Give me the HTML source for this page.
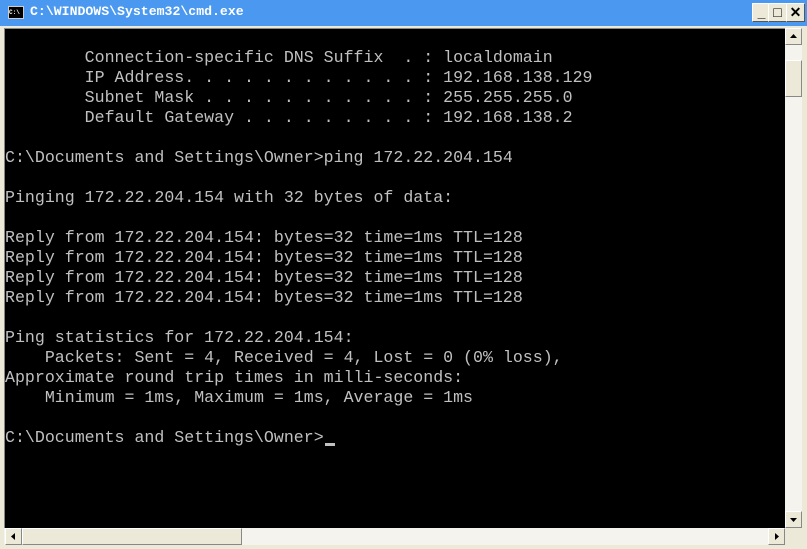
<!DOCTYPE html><html><head><style>
body{margin:0;width:807px;height:548px;overflow:hidden;background:#ece9d8;position:relative;font-family:"Liberation Sans",sans-serif}
.t{position:absolute;left:0;top:0;width:807px;height:26px;background:#4a98f0}
.tt{position:absolute;left:30px;top:4px;color:#fff;font:bold 13.2px "Liberation Mono",monospace}
.ic{position:absolute;left:8px;top:6px;width:14px;height:11px;background:#000;border:1px solid #ccc;color:#fff;font:bold 6px monospace;line-height:11px}
.b{position:absolute;top:3px;width:19px;height:19px;background:#ece9d8;border:1px solid #fff;border-right-color:#555;border-bottom-color:#555;box-sizing:border-box;text-align:center;font:bold 14px "Liberation Sans";line-height:17px;color:#000}
.con{position:absolute;left:4px;top:28px;width:781px;height:500px;background:#000;border-left:1px solid #888;border-top:1px solid #888;box-sizing:border-box}
pre{margin:0;position:absolute;left:5px;top:28px;color:#c0c0c0;font:16.6px/20px "Liberation Mono",monospace}
.vs{position:absolute;left:785px;top:28px;width:17px;height:500px;background:#f4f3ee}
.btn{position:absolute;width:17px;height:17px;background:#ece9d8;border:1px solid #fff;border-right-color:#888;border-bottom-color:#888;box-sizing:border-box}
.hs{position:absolute;left:4px;top:528px;width:781px;height:17px;background:#f4f3ee}
.cur{position:absolute;left:325px;top:443px;width:10px;height:3px;background:#c0c0c0}
</style></head><body>
<div class="t"><div class="ic">C:\</div><div class="tt">C:\WINDOWS\System32\cmd.exe</div>
<div class="b" style="left:752px">_</div><div class="b" style="left:768px">□</div><div class="b" style="left:786px">✕</div></div>
<div class="con"></div>
<pre>

        Connection-specific DNS Suffix  . : localdomain
        IP Address. . . . . . . . . . . . : 192.168.138.129
        Subnet Mask . . . . . . . . . . . : 255.255.255.0
        Default Gateway . . . . . . . . . : 192.168.138.2

C:\Documents and Settings\Owner>ping 172.22.204.154

Pinging 172.22.204.154 with 32 bytes of data:

Reply from 172.22.204.154: bytes=32 time=1ms TTL=128
Reply from 172.22.204.154: bytes=32 time=1ms TTL=128
Reply from 172.22.204.154: bytes=32 time=1ms TTL=128
Reply from 172.22.204.154: bytes=32 time=1ms TTL=128

Ping statistics for 172.22.204.154:
    Packets: Sent = 4, Received = 4, Lost = 0 (0% loss),
Approximate round trip times in milli-seconds:
    Minimum = 1ms, Maximum = 1ms, Average = 1ms

C:\Documents and Settings\Owner></pre>
<div class="cur"></div>
<div class="vs">
<div class="btn" style="left:0;top:0"><svg width="15" height="15"><path d="M4 9h7l-3.5-4z"/></svg></div>
<div class="btn" style="left:0;top:32px;height:37px"></div>
<div class="btn" style="left:0;top:483px"><svg width="15" height="15"><path d="M4 6h7l-3.5 4z"/></svg></div>
</div>
<div class="hs">
<div class="btn" style="left:1px;top:0"><svg width="15" height="15"><path d="M9 4v7l-4-3.5z"/></svg></div>
<div class="btn" style="left:18px;top:0;width:220px"></div>
<div class="btn" style="left:764px;top:0"><svg width="15" height="15"><path d="M6 4v7l4-3.5z"/></svg></div>
</div>
<div style="position:absolute;left:785px;top:528px;width:17px;height:17px;background:#ece9d8"></div>
</body></html>
